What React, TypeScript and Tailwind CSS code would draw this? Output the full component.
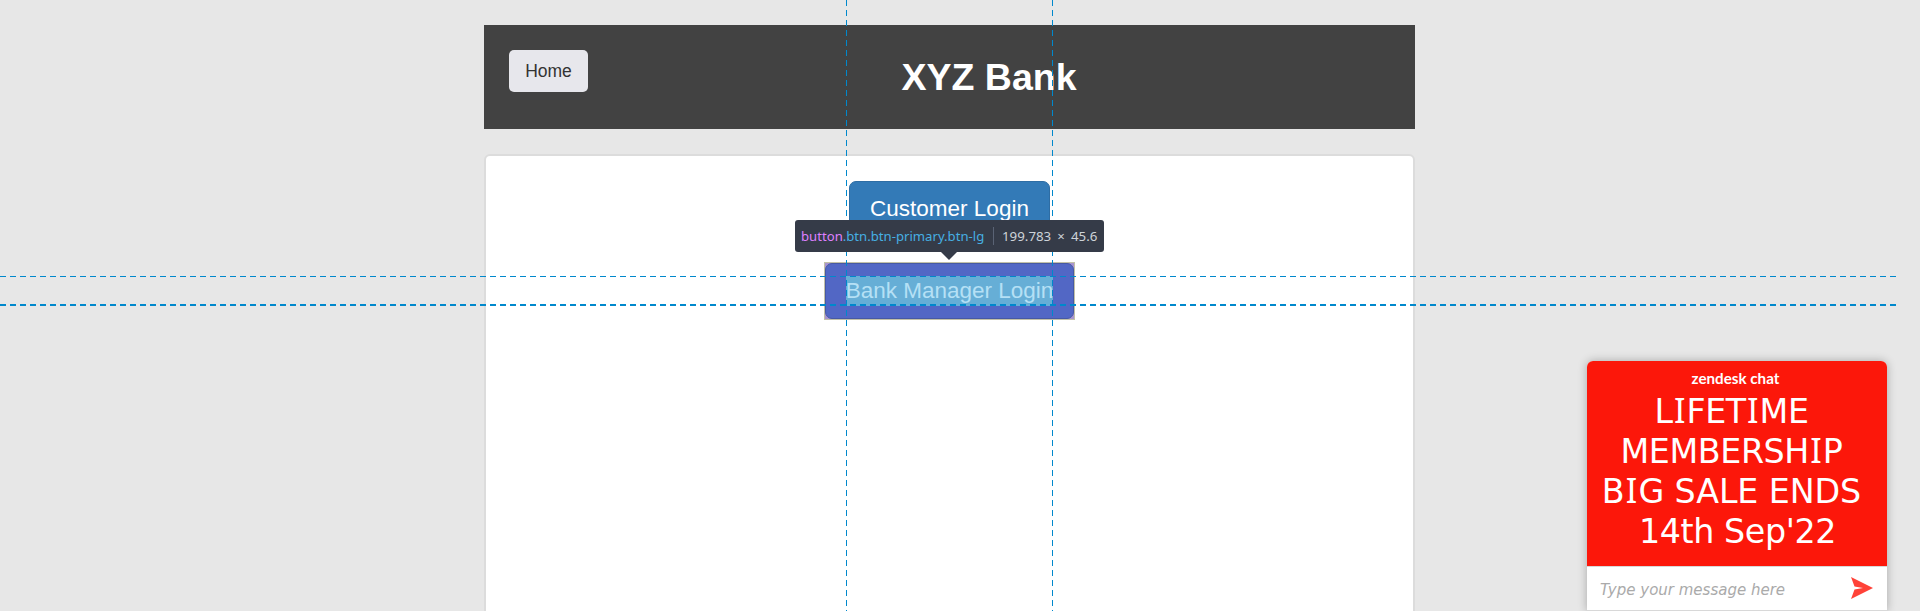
function SerifI() {
  return <span className="inline-block w-[13.8px] text-center font-['Noto_Sans',sans-serif] text-[34px] leading-none">I</span>;
}

function Guides() {
  return (
    <div className="pointer-events-none absolute inset-0">
      <div className="absolute top-0 left-[846px] h-full w-px bg-[repeating-linear-gradient(to_bottom,#0088cc_0px_6px,transparent_6px_10px)]" />
      <div className="absolute top-0 left-[1052px] h-full w-px bg-[repeating-linear-gradient(to_bottom,#0088cc_0px_6px,transparent_6px_10px)]" />
      <div className="absolute top-[276px] left-0 h-px w-[1896px] bg-[repeating-linear-gradient(to_right,#0088cc_0px_6px,transparent_6px_10px)]" />
      <div className="absolute top-[304px] left-0 h-[2px] w-[1896px] bg-[repeating-linear-gradient(to_right,#0088cc_0px_6px,transparent_6px_10px)]" />
    </div>
  );
}

function InspectorTip() {
  return (
    <div className="absolute top-[220px] left-[795px] flex h-8 w-[309px] items-center rounded-[3px] bg-[#353b48] pl-1.5 font-['Noto_Sans',sans-serif] text-[13.15px] whitespace-nowrap">
      <span className="w-[184px] pt-0.5 text-[#46afe3]">
        <span className="text-[#df80ff]">button</span>.btn.btn-primary.btn-lg
      </span>
      <span className="ml-2 h-[18px] w-px bg-[#5a6375]" />
      <span className="ml-2 pt-0.5 text-[13.3px] [word-spacing:2.6px] text-[#ced3d9]">199.783 × 45.6</span>
      <svg className="absolute top-8 left-[146px]" width="16" height="8" viewBox="0 0 16 8">
        <path d="M0 0H16L8 8Z" fill="#353b48" />
      </svg>
    </div>
  );
}

function Chat() {
  return (
    <aside className="absolute top-[361px] left-[1587px] flex h-[250px] w-[300px] flex-col overflow-hidden rounded-t-[6px] bg-white shadow-[0_0_10px_rgba(0,0,0,0.28)]">
      <div className="flex h-[205px] flex-col items-center bg-[#fc170a] text-white">
        <div className="mt-[6px] mr-[3px] h-[22px] font-['Lato',sans-serif] text-[15.2px] leading-[22px] font-bold">zendesk chat</div>
        <div className="mt-[3px] w-full pr-[11px] text-center font-['DejaVu_Sans',sans-serif] text-[33.3px] leading-10 tracking-[-0.4px] whitespace-nowrap">
          <div className="h-10">L<SerifI />FET<SerifI />ME</div>
          <div className="h-10">MEMBERSH<SerifI />P</div>
          <div className="h-10 tracking-[-0.1px]">B<SerifI />G SALE ENDS</div>
          <div className="h-10 pl-3">14th Sep'22</div>
        </div>
      </div>
      <div className="flex h-[45px] items-center justify-between border-y border-[#d8d8d8] pr-[14px] pl-[13px]">
        <span className="pt-[3px] font-['DejaVu_Sans',sans-serif] text-[15px] text-[#aaa] italic">Type your message here</span>
        <svg className="mb-[2px]" width="22" height="22" viewBox="0 0 22 22">
          <path d="M0 0L22 11L0 22L3.5 12.5L12 11L3.5 9.5Z" fill="#ff4238" />
        </svg>
      </div>
    </aside>
  );
}

export default function App() {
  return (
    <div className="relative h-[611px] w-[1920px] overflow-hidden bg-[#e7e7e7] pt-[25px] pl-[484px] font-['Liberation_Sans',Arial,sans-serif]">
      <header className="flex h-[104px] w-[931px] items-start bg-[#424242] pt-[25px] pl-[25px]">
        <button className="flex h-[42px] w-[79px] items-center justify-center rounded-[5px] bg-[#e7e7ec] text-[17.5px] text-[#333]">Home</button>
        <h1 className="flex-1 pr-[25px] text-center text-[37.5px] leading-[54px] font-bold text-white">XYZ Bank</h1>
      </header>
      <main className="mt-[25px] flex h-[500px] w-[931px] flex-col items-center rounded-[6px] border-2 border-[#dcdcdc] bg-white pt-[25px]">
        <button className="flex h-[57px] w-[201px] items-center justify-center rounded-[7px] border border-[#2e6da4] bg-[#337ab7] pb-px text-[22.5px] text-white">Customer Login</button>
        <div className="mt-6 h-[58px] w-[251px] bg-[#a794cf] p-px outline-1 -outline-offset-1 outline-[#c2c0a8]">
          <button className="flex h-full w-full items-center justify-center rounded-[7px] border border-[#4659a4] bg-[#5267c5] text-[22.5px] text-[#b5e0f5]">
            <span className="h-[30px] bg-[#66aed6] leading-[30px]">Bank Manager Login</span>
          </button>
        </div>
      </main>
      <Guides />
      <InspectorTip />
      <Chat />
    </div>
  );
}
